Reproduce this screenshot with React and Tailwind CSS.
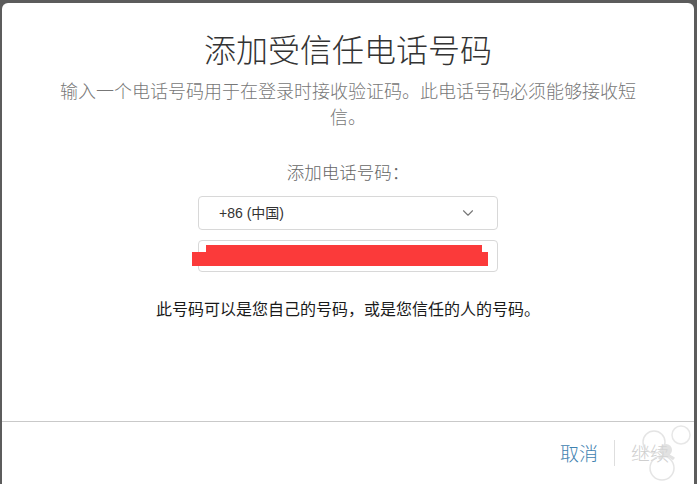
import { ChevronDown } from "lucide-react";

const cjk = "font-['Noto_Sans_CJK_SC',sans-serif]";

const Watermark = () => (
  <svg width="60" height="64" viewBox="0 0 60 64" className="absolute right-0 bottom-0 opacity-70" fill="none">
    <circle cx="20" cy="22" r="11" stroke="#dadada" strokeWidth="1.5" />
    <circle cx="47" cy="15" r="9" stroke="#dedede" strokeWidth="1.5" />
    <circle cx="28" cy="48" r="12" stroke="#dadada" strokeWidth="1.5" />
    <circle cx="32" cy="30" r="6" fill="#d6d6d6" />
    <path d="M25 39 Q32 32 40 39" stroke="#d6d6d6" strokeWidth="3" />
  </svg>
);

const App = () => {
  return (
    <div className={`w-[697px] h-[484px] bg-[#5c5c5c] pt-[3px] pl-[2px] pr-[3px] ${cjk}`}>
      <div className="relative flex h-full flex-col rounded-t-[6px] bg-white">
        <div className="flex flex-1 flex-col items-center">
          <h1 className="mt-[25px] text-[32px] leading-[40px] font-light text-[#333]">
            添加受信任电话号码
          </h1>
          <p className="mt-[9px] w-[580px] text-center text-[18px] leading-[26px] font-light text-[#777]">
            输入一个电话号码用于在登录时接收验证码。此电话号码必须能够接收短信。
          </p>

          <div className="mt-[31px] text-[17.5px] leading-[24px] font-light text-[#666]">添加电话号码：</div>

          <div className="mt-[12px] flex h-[34px] w-[300px] items-center justify-between rounded-[4px] border border-[#d8d8d8] pl-[20px] pr-[20px]">
            <span className="font-['Liberation_Sans','Noto_Sans_CJK_SC',sans-serif] text-[14px] text-[#333]">
              +86 (中国)
            </span>
            <ChevronDown size={18} strokeWidth={1.5} className="text-[#777]" />
          </div>

          <div className="relative mt-[10px] h-[32px] w-[300px] rounded-[4px] border border-[#d8d8d8]">
            <div className="absolute left-[7px] top-[4px] h-[20px] w-[276px] bg-[#fb3a3a]" />
            <div className="absolute left-[-7px] top-[11px] h-[14px] w-[296px] bg-[#fb3a3a]" />
          </div>

          <p className="mt-[25px] text-[16px] leading-[22px] font-normal text-[#1a1a1a]">
            此号码可以是您自己的号码，或是您信任的人的号码。
          </p>
        </div>

        <div className="flex h-[63px] items-center justify-end border-t border-[#c9c9c9] pr-[25px]">
          <span className="text-[19px] font-light text-[#3f82b0]">取消</span>
          <span className="mx-[16px] h-[26px] w-px bg-[#dedede]" />
          <span className="text-[19px] font-light text-[#cfcfcf]">继续</span>
        </div>

        <Watermark />
      </div>
    </div>
  );
};

export default App;
